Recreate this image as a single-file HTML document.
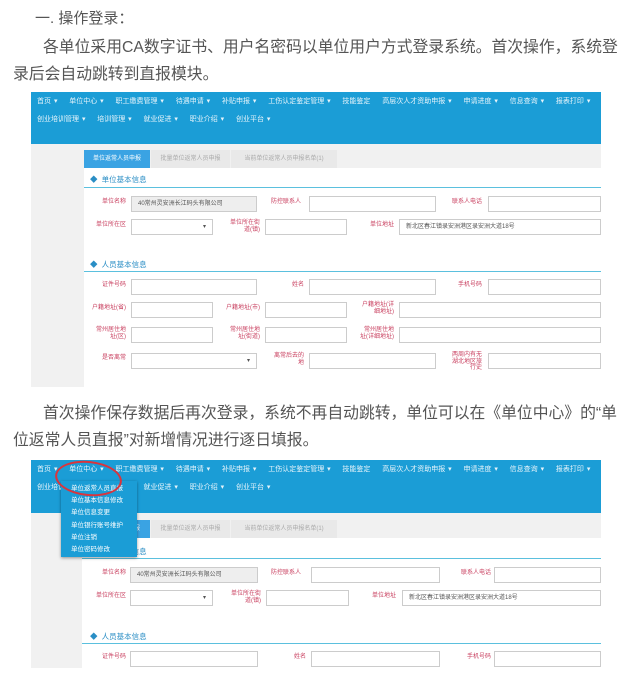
<!DOCTYPE html>
<html><head><meta charset="utf-8"><style>
body{margin:0;background:#fff;width:633px;height:679px;position:relative;overflow:hidden;font-family:"Liberation Sans","Noto Sans CJK SC",sans-serif}
.p{position:absolute;color:#555;font-size:15.8px;white-space:nowrap}
.shot{position:absolute;left:31px;width:570px;background:#f1f1f1;overflow:hidden}
.hd{position:absolute;left:0;top:0;width:570px;background:#1b9dd6}
.m{position:absolute;color:#e6f4fb;font-size:7px;white-space:nowrap;word-spacing:1px}
.wh{position:absolute;left:53px;right:0;background:#fff}
.tab{position:absolute;height:18px;font-size:6px;line-height:18px;text-align:center;color:#aaa;background:#e9e9e9}
.tab.a{background:#3aa3e3;color:#fff}
.sec{position:absolute;left:59px;font-size:7.5px;color:#2a8ec5}
.ln{position:absolute;left:53px;right:0;height:1px;background:#5bc0de}
.lb{position:absolute;font-size:6px;color:#c94060;text-align:right;line-height:6.5px;white-space:nowrap}
.in{position:absolute;height:16px;border:1px solid #ccc;background:#fff;box-sizing:border-box;font-size:6px;color:#555;line-height:14px;padding-left:6px;white-space:nowrap}
.g{background:#eee}
</style></head><body>
<div class="p" style="left:35px;top:7px;font-size:15px">一. 操作登录：</div>
<div class="p" style="left:43px;top:34px">各单位采用CA数字证书、用户名密码以单位用户方式登录系统。首次操作，系统登</div>
<div class="p" style="left:13px;top:61px">录后会自动跳转到直报模块。</div>

<div class="shot" style="top:92px;height:295px">
 <div class="hd" style="height:52px"></div>
 <div class="m" style="left:6px;top:4px">首页 ▾ &nbsp;&nbsp; 单位中心 ▾ &nbsp;&nbsp; 职工缴费管理 ▾ &nbsp;&nbsp; 待遇申请 ▾ &nbsp;&nbsp; 补贴申报 ▾ &nbsp;&nbsp; 工伤认定鉴定管理 ▾ &nbsp;&nbsp; 技能鉴定 &nbsp;&nbsp; 高层次人才资助申报 ▾ &nbsp;&nbsp; 申请进度 ▾ &nbsp;&nbsp; 信息查询 ▾ &nbsp;&nbsp; 报表打印 ▾</div>
 <div class="m" style="left:6px;top:22px">创业培训管理 ▾ &nbsp;&nbsp; 培训管理 ▾ &nbsp;&nbsp; 就业促进 ▾ &nbsp;&nbsp; 职业介绍 ▾ &nbsp;&nbsp; 创业平台 ▾</div>
 <div class="wh" style="top:76px;bottom:0"></div>
 <div class="tab a" style="left:53px;top:58px;width:66px">单位返常人员申报</div>
 <div class="tab" style="left:120px;top:58px;width:79px">批量单位返常人员申报</div>
 <div class="tab" style="left:200px;top:58px;width:106px">当前单位返常人员申报名单(1)</div>
 <div class="sec" style="top:82px">◆ &nbsp;单位基本信息</div>
 <div class="ln" style="top:95px"></div>
 <div class="lb" style="right:475px;top:107px">单位名称</div><div class="in g" style="left:100px;top:104px;width:126px">40常州灵安洲长江码头有限公司</div>
 <div class="lb" style="left:240px;top:107px">防控联系人</div><div class="in" style="left:278px;top:104px;width:127px"></div>
 <div class="lb" style="right:119px;top:107px">联系人电话</div><div class="in" style="left:457px;top:104px;width:113px"></div>
 <div class="lb" style="right:475px;top:130px">单位所在区</div><div class="in" style="left:100px;top:127px;width:82px;text-align:right;padding-right:6px">▾</div>
 <div class="lb" style="right:341px;top:128px">单位所在街<br>道(镇)</div><div class="in" style="left:234px;top:127px;width:82px"></div>
 <div class="lb" style="right:207px;top:130px">单位地址</div><div class="in" style="left:368px;top:127px;width:202px">新北区春江镇录安洲港区录安洲大道18号</div>
 <div class="sec" style="top:167px">◆ &nbsp;人员基本信息</div>
 <div class="ln" style="top:179px"></div>
 <div class="lb" style="right:475px;top:190px">证件号码</div><div class="in" style="left:100px;top:187px;width:126px"></div>
 <div class="lb" style="right:297px;top:190px">姓名</div><div class="in" style="left:278px;top:187px;width:127px"></div>
 <div class="lb" style="right:119px;top:190px">手机号码</div><div class="in" style="left:457px;top:187px;width:113px"></div>
 <div class="lb" style="right:475px;top:213px">户籍地址(省)</div><div class="in" style="left:100px;top:210px;width:82px"></div>
 <div class="lb" style="right:341px;top:213px">户籍地址(市)</div><div class="in" style="left:234px;top:210px;width:82px"></div>
 <div class="lb" style="right:207px;top:210px">户籍地址(详<br>细地址)</div><div class="in" style="left:368px;top:210px;width:202px"></div>
 <div class="lb" style="right:475px;top:235px">常州居住地<br>址(区)</div><div class="in" style="left:100px;top:235px;width:82px"></div>
 <div class="lb" style="right:341px;top:235px">常州居住地<br>址(街道)</div><div class="in" style="left:234px;top:235px;width:82px"></div>
 <div class="lb" style="right:207px;top:235px">常州居住地<br>址(详细地址)</div><div class="in" style="left:368px;top:235px;width:202px"></div>
 <div class="lb" style="right:475px;top:263px">是否离常</div><div class="in" style="left:100px;top:261px;width:126px;text-align:right;padding-right:6px">▾</div>
 <div class="lb" style="right:297px;top:261px">离常后去的<br>地</div><div class="in" style="left:278px;top:261px;width:127px"></div>
 <div class="lb" style="right:119px;top:260px">两周内有无<br>湖北地区旅<br>行史</div><div class="in" style="left:457px;top:261px;width:113px"></div>
</div>

<div class="p" style="left:43px;top:400px">首次操作保存数据后再次登录，系统不再自动跳转，单位可以在《单位中心》的“单</div>
<div class="p" style="left:13px;top:427px">位返常人员直报”对新增情况进行逐日填报。</div>

<div class="shot" style="top:460px;height:208px">
 <div class="hd" style="height:53px"></div>
 <div class="m" style="left:6px;top:4px">首页 ▾ &nbsp;&nbsp; 单位中心 ▾ &nbsp;&nbsp; 职工缴费管理 ▾ &nbsp;&nbsp; 待遇申请 ▾ &nbsp;&nbsp; 补贴申报 ▾ &nbsp;&nbsp; 工伤认定鉴定管理 ▾ &nbsp;&nbsp; 技能鉴定 &nbsp;&nbsp; 高层次人才资助申报 ▾ &nbsp;&nbsp; 申请进度 ▾ &nbsp;&nbsp; 信息查询 ▾ &nbsp;&nbsp; 报表打印 ▾</div>
 <div class="m" style="left:6px;top:22px">创业培训管理 ▾ &nbsp;&nbsp; 培训管理 ▾ &nbsp;&nbsp; 就业促进 ▾ &nbsp;&nbsp; 职业介绍 ▾ &nbsp;&nbsp; 创业平台 ▾</div>
 <div class="wh" style="top:78px;bottom:0;left:51px"></div>
 <div class="tab a" style="left:51px;top:60px;width:68px">单位返常人员申报</div>
 <div class="tab" style="left:120px;top:60px;width:79px">批量单位返常人员申报</div>
 <div class="tab" style="left:200px;top:60px;width:106px">当前单位返常人员申报名单(1)</div>
 <div class="sec" style="top:86px">◆ &nbsp;单位基本信息</div>
 <div class="ln" style="top:98px;left:51px"></div>
 <div class="lb" style="right:475px;top:110px">单位名称</div><div class="in g" style="left:99px;top:107px;width:128px">40常州灵安洲长江码头有限公司</div>
 <div class="lb" style="left:240px;top:110px">防控联系人</div><div class="in" style="left:280px;top:107px;width:129px"></div>
 <div class="lb" style="right:110px;top:110px">联系人电话</div><div class="in" style="left:463px;top:107px;width:107px"></div>
 <div class="lb" style="right:475px;top:133px">单位所在区</div><div class="in" style="left:99px;top:130px;width:83px;text-align:right;padding-right:6px">▾</div>
 <div class="lb" style="right:340px;top:131px">单位所在街<br>道(镇)</div><div class="in" style="left:235px;top:130px;width:83px"></div>
 <div class="lb" style="right:205px;top:133px">单位地址</div><div class="in" style="left:371px;top:130px;width:199px">新北区春江镇录安洲港区录安洲大道18号</div>
 <div class="sec" style="top:171px">◆ &nbsp;人员基本信息</div>
 <div class="ln" style="top:183px;left:51px"></div>
 <div class="lb" style="right:475px;top:194px">证件号码</div><div class="in" style="left:99px;top:191px;width:128px"></div>
 <div class="lb" style="right:295px;top:194px">姓名</div><div class="in" style="left:280px;top:191px;width:129px"></div>
 <div class="lb" style="right:110px;top:194px">手机号码</div><div class="in" style="left:463px;top:191px;width:107px"></div>
 <div style="position:absolute;left:30px;top:21px;width:76px;height:76px;background:#1b9dd6;box-shadow:0 1px 3px rgba(0,0,0,.4)"></div>
 <div class="m" style="left:40px;top:23px;line-height:12.2px;color:#fff;font-size:6.5px">单位返常人员直报<br>单位基本信息修改<br>单位信息变更<br>单位银行账号维护<br>单位注销<br>单位密码修改</div>
 <div style="position:absolute;left:24px;top:1px;width:63px;height:31px;border:2px solid #d9353d;border-radius:50%;transform:rotate(6deg)"></div>
</div>
</body></html>
